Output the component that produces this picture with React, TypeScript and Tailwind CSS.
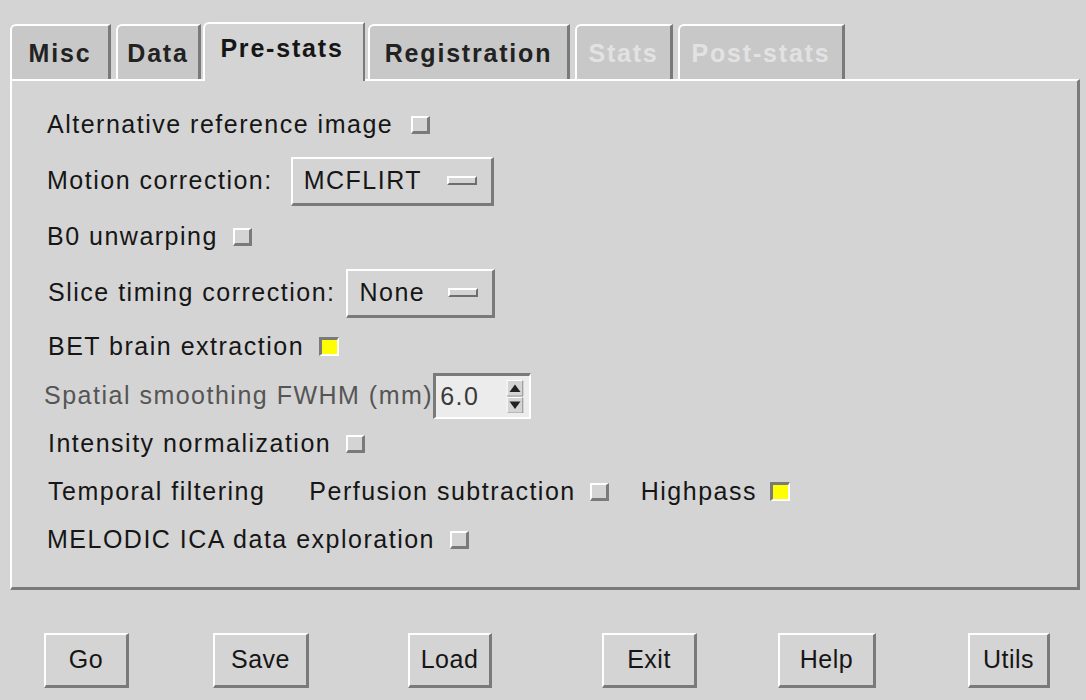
import React from "react";

type Tab = { label: string; active?: boolean; disabled?: boolean; w: number };

const tabs: Tab[] = [
  { label: "Misc", w: 101 },
  { label: "Data", w: 85 },
  { label: "Pre-stats", w: 162, active: true },
  { label: "Registration", w: 202 },
  { label: "Stats", w: 98, disabled: true },
  { label: "Post-stats", w: 167, disabled: true },
];

const raised = "border-t-2 border-l-2 border-b-[3px] border-r-[3px] border-t-white border-l-white border-b-[#7a7a7a] border-r-[#7a7a7a]";

function Check({ on = false }: { on?: boolean }) {
  return on ? (
    <span className="inline-block w-[20px] h-[19px] border-t-[3px] border-l-[3px] border-b-2 border-r-2 border-t-[#7a7a7a] border-l-[#7a7a7a] border-b-white border-r-white bg-[#ffff00]" />
  ) : (
    <span className="inline-block w-[19px] h-[18px] border-t-2 border-l-2 border-b-[3px] border-r-[3px] border-t-white border-l-white border-b-[#7a7a7a] border-r-[#7a7a7a] bg-[#d4d4d4]" />
  );
}

function MenuButton({ label, w }: { label: string; w: number }) {
  return (
    <div className={`flex items-center justify-between h-[49px] pl-[11px] pr-[14px] ${raised}`} style={{ width: w }}>
      <span>{label}</span>
      <span className="inline-block w-[30px] h-[9px] border-2 border-t-white border-l-white border-b-[#6e6e6e] border-r-[#6e6e6e] bg-[#d4d4d4]" />
    </div>
  );
}

function Spin() {
  return (
    <div className="flex items-stretch h-[46px] w-[98px] border-t-[3px] border-l-[3px] border-b-2 border-r-2 border-t-[#7a7a7a] border-l-[#7a7a7a] border-b-white border-r-white bg-[#ececec]">
      <span className="flex-1 flex items-center pl-[4px] text-[#3a3a3a]">6.0</span>
      <div className="w-[18px] flex flex-col mr-[5px] my-[4px]">
        <svg viewBox="0 0 18 18" className="w-[18px] h-[18px]">
          <rect x="0.5" y="0.5" width="17" height="17" fill="#d4d4d4" stroke="#fff" />
          <path d="M17.5 0.5 V17.5 H0.5" fill="none" stroke="#7a7a7a" />
          <path d="M3 13 L9 5 L15 13 Z" fill="#222" />
        </svg>
        <svg viewBox="0 0 18 18" className="w-[18px] h-[18px]">
          <rect x="0.5" y="0.5" width="17" height="17" fill="#d4d4d4" stroke="#fff" />
          <path d="M17.5 0.5 V17.5 H0.5" fill="none" stroke="#7a7a7a" />
          <path d="M3 5 L9 13 L15 5 Z" fill="#222" />
        </svg>
      </div>
    </div>
  );
}

function Btn({ label, w, ml }: { label: string; w: number; ml: number }) {
  return (
    <div className={`flex items-center justify-center h-[55px] tracking-[0.5px] ${raised}`} style={{ width: w, marginLeft: ml }}>
      {label}
    </div>
  );
}

export default function App() {
  return (
    <div className="w-[1086px] h-[700px] bg-[#d4d4d4] text-[#161616] overflow-hidden" style={{ fontFamily: '"Liberation Sans", Arial, sans-serif' }}>
      {/* tab strip */}
      <div className="flex items-end pl-[10px] pt-[20px] h-[79px]">
        {tabs.map((t) =>
          t.active ? (
            <div
              key={t.label}
              className="relative z-10 -mb-[2px] h-[59px] -ml-[3px] mr-[3px] flex items-center justify-center bg-[#d4d4d4] border-t-2 border-l-2 border-r-2 border-t-white border-l-white border-r-[#7a7a7a] rounded-tl-[6px] text-[25px] font-bold tracking-[1.8px] pb-[8px] pr-[4px]"
              style={{ width: t.w }}
            >
              {t.label}
            </div>
          ) : (
            <div
              key={t.label}
              className={`h-[55px] mr-[5px] flex items-center justify-center bg-[#c8c8c8] border-t-2 border-l-2 border-r-[3px] border-t-white border-l-white border-r-[#7a7a7a] rounded-tl-[6px] text-[25px] font-bold tracking-[1.8px] pt-[2px] ${t.disabled ? "text-[#e2e2e2]" : "text-[#222]"}`}
              style={{ width: t.w }}
            >
              {t.label}
            </div>
          )
        )}
      </div>

      {/* panel */}
      <div className="ml-[10px] mr-[6px] h-[511px] border-t-2 border-l-2 border-b-[3px] border-r-[3px] border-t-white border-l-white border-b-[#7a7a7a] border-r-[#7a7a7a] pt-[16px] pl-[35px] text-[25px] tracking-[1.5px]">
        <div className="flex items-center gap-[18px] h-[56px]">
          <span>Alternative reference image</span>
          <Check />
        </div>
        <div className="flex items-center gap-[18px] h-[56px]">
          <span>Motion correction:</span>
          <MenuButton label="MCFLIRT" w={203} />
        </div>
        <div className="flex items-center gap-[15px] h-[56px]">
          <span>B0 unwarping</span>
          <Check />
        </div>
        <div className="flex items-center gap-[11px] h-[56px] pl-[1px]">
          <span>Slice timing correction:</span>
          <MenuButton label="None" w={149} />
        </div>
        <div className="flex items-center gap-[15px] h-[51px] pl-[1px]">
          <span>BET brain extraction</span>
          <Check on />
        </div>
        <div className="flex items-center gap-0 h-[48px] -ml-[3px] text-[#555]">
          <span>Spatial smoothing FWHM (mm)</span>
          <Spin />
        </div>
        <div className="flex items-center gap-[15px] h-[47px] pl-[1px]">
          <span>Intensity normalization</span>
          <Check />
        </div>
        <div className="flex items-center h-[49px] pl-[1px]">
          <span>Temporal filtering</span>
          <span className="ml-[44px]">Perfusion subtraction</span>
          <span className="ml-[14px] flex"><Check /></span>
          <span className="ml-[32px]">Highpass</span>
          <span className="ml-[13px] flex"><Check on /></span>
        </div>
        <div className="flex items-center gap-[15px] h-[48px]">
          <span>MELODIC ICA data exploration</span>
          <Check />
        </div>
      </div>

      {/* buttons */}
      <div className="flex items-center pt-[43px] text-[25px]">
        <Btn label="Go" w={85} ml={44} />
        <Btn label="Save" w={96} ml={84} />
        <Btn label="Load" w={84} ml={99} />
        <Btn label="Exit" w={95} ml={110} />
        <Btn label="Help" w={98} ml={81} />
        <Btn label="Utils" w={82} ml={92} />
      </div>
    </div>
  );
}
